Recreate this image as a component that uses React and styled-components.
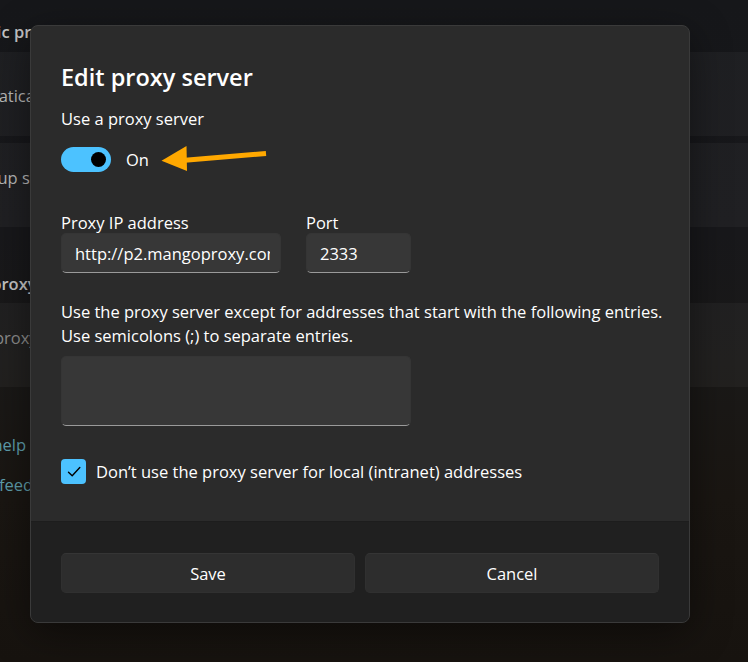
import styled, { createGlobalStyle } from "styled-components";

const GlobalStyle = createGlobalStyle`
  html, body {
    margin: 0;
    padding: 0;
    background: #16171a;
  }
  body {
    font-family: "Open Sans", "Noto Sans", sans-serif;
  }
  * {
    box-sizing: border-box;
  }
`;

const Screen = styled.div`
  position: relative;
  width: 748px;
  height: 662px;
  overflow: hidden;
  background: linear-gradient(
    180deg,
    #16171a 0%,
    #18181b 35%,
    #1a1918 55%,
    #1a1612 75%,
    #17130f 100%
  );
`;

/* settings page behind the dialog */
const SettingsPane = styled.div`
  display: flex;
  flex-direction: column;
  width: 900px;
  margin-left: -73px;
  padding-top: 20px;
`;

const SectionHeader = styled.div`
  margin: ${(p) => p.$top || 0}px 0 ${(p) => p.$bottom || 0}px;
  font-size: 16.5px;
  font-weight: 600;
  line-height: 24px;
  color: #c6c6c6;
`;

const Card = styled.div`
  height: 84px;
  margin-bottom: 7px;
  padding: ${(p) => p.$pad}px 0 0 ${(p) => p.$inset ?? 20}px;
  border-radius: 5px;
  background: rgba(255, 255, 255, 0.035);
  font-size: 16.5px;
  line-height: 24px;
  color: ${(p) => (p.$muted ? "#8c8c8c" : "#b8b8b8")};
`;

const HelpLinks = styled.div`
  display: flex;
  flex-direction: column;
  gap: 16px;
  margin-top: 39px;
  padding-left: 34px;
`;

const HelpLink = styled.span`
  padding-left: ${(p) => p.$indent || 0}px;
  font-size: 16.5px;
  line-height: 24px;
  color: #5f9fad;
`;

/* dialog */
const Dialog = styled.div`
  position: absolute;
  left: 30px;
  top: 25px;
  width: 660px;
  height: 598px;
  display: flex;
  flex-direction: column;
  border: 1px solid #3a3a3a;
  border-radius: 8px;
  overflow: hidden;
  background: #2b2b2b;
  box-shadow: 0 10px 40px rgba(0, 0, 0, 0.45);
  color: #ffffff;
`;

const DialogBody = styled.div`
  flex: 1;
  display: flex;
  flex-direction: column;
  padding: 35px 30px 0;
`;

const Title = styled.h2`
  margin: 0;
  font-size: 23.5px;
  font-weight: 600;
  line-height: 32px;
`;

const Text = styled.div`
  margin-top: ${(p) => p.$top || 0}px;
  font-size: 16.5px;
  line-height: 24px;
  white-space: nowrap;
`;

const ToggleRow = styled.div`
  position: relative;
  display: flex;
  align-items: center;
  gap: 15px;
  height: 25px;
  margin-top: 16px;
  font-size: 16.5px;
`;

const Track = styled.span`
  position: relative;
  width: 50px;
  height: 25px;
  border-radius: 13px;
  background: #4cc2ff;
`;

const Knob = styled.span`
  position: absolute;
  right: 5px;
  top: 5px;
  width: 15px;
  height: 15px;
  border-radius: 50%;
  background: #000;
`;

const Arrow = styled.svg`
  position: absolute;
  left: 95px;
  top: -7px;
  width: 115px;
  height: 40px;
`;

const FieldRow = styled.div`
  display: flex;
  gap: 25px;
  margin-top: 41px;
`;

const Field = styled.label`
  display: flex;
  flex-direction: column;
  width: ${(p) => p.$w}px;
`;

const FieldLabel = styled.span`
  font-size: 16.5px;
  line-height: 20px;
`;

const Input = styled.input`
  width: 100%;
  height: 40px;
  padding: 0 10px 0 13px;
  border: 1px solid #353535;
  border-bottom-color: #9a9a9a;
  border-radius: 5px;
  background: #373737;
  color: #ffffff;
  font-family: inherit;
  font-size: 16.5px;
  outline: none;
`;

const TextArea = styled.textarea`
  width: 350px;
  height: 70px;
  margin-top: 8px;
  padding: 8px 14px;
  border: 1px solid #353535;
  border-bottom-color: #9a9a9a;
  border-radius: 5px;
  background: #373737;
  color: #ffffff;
  font-family: inherit;
  font-size: 16.5px;
  resize: none;
  outline: none;
`;

const CheckRow = styled.div`
  display: flex;
  align-items: center;
  gap: 10px;
  margin-top: 33px;
  font-size: 16.5px;
`;

const CheckBox = styled.span`
  display: flex;
  align-items: center;
  justify-content: center;
  width: 25px;
  height: 25px;
  border-radius: 4px;
  background: #4cc2ff;
`;

const Footer = styled.div`
  display: flex;
  gap: 10px;
  height: 101px;
  padding: 31px 30px 0;
  border-top: 1px solid #1d1d1d;
  background: #202020;
`;

const Button = styled.button`
  flex: 1;
  height: 40px;
  border: 1px solid #303030;
  border-top-color: #353535;
  border-radius: 5px;
  background: #2d2d2d;
  color: #ffffff;
  font-family: inherit;
  font-size: 16.5px;
`;

export default function App() {
  return (
    <>
      <GlobalStyle />
      <Screen>
        <SettingsPane>
          <SectionHeader $bottom={8}>Automatic proxy setup</SectionHeader>
          <Card $pad={32}>Automatically detect settings</Card>
          <Card $pad={23} $inset={14}>
            Use setup script
          </Card>
          <SectionHeader $top={38} $bottom={7}>
            Manual proxy setup
          </SectionHeader>
          <Card $pad={23} $muted>
            Use a proxy server
          </Card>
          <HelpLinks>
            <HelpLink>Get help</HelpLink>
            <HelpLink>Give feedback</HelpLink>
          </HelpLinks>
        </SettingsPane>

        <Dialog>
          <DialogBody>
            <Title>Edit proxy server</Title>
            <Text $top={14}>Use a proxy server</Text>
            <ToggleRow>
              <Track>
                <Knob />
              </Track>
              On
              <Arrow viewBox="0 0 115 40">
                <line
                  x1="26"
                  y1="20.5"
                  x2="110"
                  y2="13.5"
                  stroke="#ffa800"
                  strokeWidth="5"
                />
                <polygon points="5.5,20.7 30.5,6 31,31" fill="#ffa800" />
              </Arrow>
            </ToggleRow>

            <FieldRow>
              <Field $w={220}>
                <FieldLabel>Proxy IP address</FieldLabel>
                <Input defaultValue="http://p2.mangoproxy.com" readOnly />
              </Field>
              <Field $w={105}>
                <FieldLabel>Port</FieldLabel>
                <Input defaultValue="2333" readOnly />
              </Field>
            </FieldRow>

            <Text $top={27}>
              Use the proxy server except for addresses that start with the
              following entries.
              <br />
              Use semicolons (;) to separate entries.
            </Text>
            <TextArea readOnly />

            <CheckRow>
              <CheckBox>
                <svg width="14" height="12" viewBox="0 0 14 12">
                  <path
                    d="M1.5 6.3 L5.2 9.8 L12.8 1.6"
                    fill="none"
                    stroke="#000"
                    strokeWidth="1.4"
                    strokeLinecap="round"
                    strokeLinejoin="round"
                  />
                </svg>
              </CheckBox>
              Don’t use the proxy server for local (intranet) addresses
            </CheckRow>
          </DialogBody>

          <Footer>
            <Button>Save</Button>
            <Button>Cancel</Button>
          </Footer>
        </Dialog>
      </Screen>
    </>
  );
}
